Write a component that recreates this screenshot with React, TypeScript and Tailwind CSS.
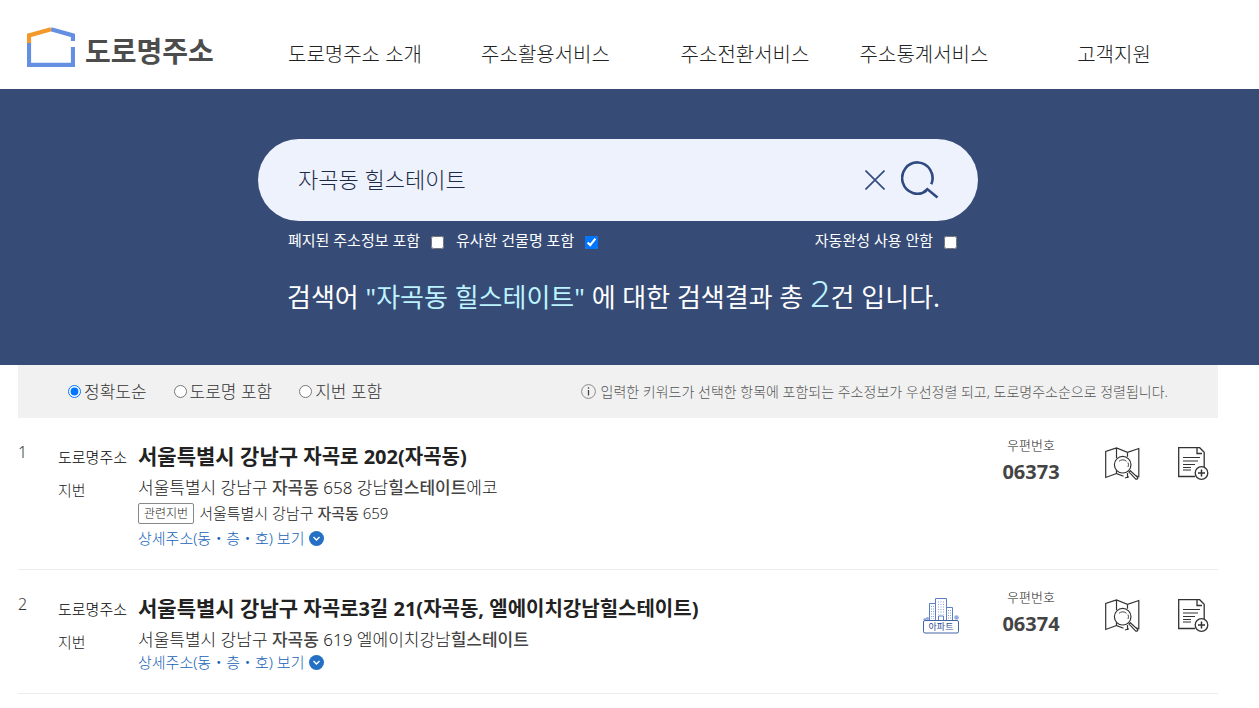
import { useState } from 'react'
import type { ReactNode } from 'react'

interface Resultado {
  id: number
  region: string
  road: string
  jibun: ReactNode
  related?: ReactNode
  zip: string
  apartment?: boolean
}

const MENU = ['도로명주소 소개', '주소활용서비스', '주소전환서비스', '주소통계서비스', '고객지원']

const SORT_OPTIONS = [
  { value: 'accuracy', label: '정확도순' },
  { value: 'road', label: '도로명 포함' },
  { value: 'jibun', label: '지번 포함' },
]

const RESULTS: Resultado[] = [
  {
    id: 1,
    region: '서울특별시 강남구',
    road: '자곡로 202(자곡동)',
    jibun: (
      <>
        서울특별시 강남구 <b className="font-medium text-[#444]">자곡동</b> 658 강남
        <b className="font-medium text-[#444]">힐스테이트</b>에코
      </>
    ),
    related: (
      <>
        서울특별시 강남구 <b className="font-medium text-[#444]">자곡동</b> 659
      </>
    ),
    zip: '06373',
  },
  {
    id: 2,
    region: '서울특별시 강남구',
    road: '자곡로3길 21(자곡동, 엘에이치강남힐스테이트)',
    jibun: (
      <>
        서울특별시 강남구 <b className="font-medium text-[#444]">자곡동</b> 619 엘에이치강남
        <b className="font-medium text-[#444]">힐스테이트</b>
      </>
    ),
    zip: '06374',
    apartment: true,
  },
]

function LogoIcon() {
  return (
    <svg width="48" height="40" viewBox="0 0 48 40" fill="none" strokeWidth="4.200">
      <path d="M24 2.200 46 8.400V14M46 20v17.900H2V16" stroke="#648fe3" />
      <path d="M2 16V8.400L24 2.200" stroke="#f3982a" />
    </svg>
  )
}

function CloseIcon() {
  return (
    <svg width="20" height="20" viewBox="0 0 20 20" fill="none" stroke="#324a7c" strokeWidth="1.600">
      <path d="M.5.5l19 19M19.500.5l-19 19" />
    </svg>
  )
}

function SearchIcon() {
  return (
    <svg width="38" height="38" viewBox="0 0 38 38" fill="none" stroke="#304a80" strokeWidth="2.600">
      <path d="M30.300 23.200A15.200 15.600 0 1 0 25.600 29.400" />
      <path d="M22.800 31.200 26.300 28.100 36.500 36.600" />
    </svg>
  )
}

function InfoIcon() {
  return (
    <svg width="15" height="15" viewBox="0 0 15 15" fill="none">
      <circle cx="7.500" cy="7.500" r="6.900" stroke="#8a8a8a" />
      <path d="M7.500 6v5.500M7.500 3.300v1.500" stroke="#444" strokeWidth="1.300" />
    </svg>
  )
}

function MapIcon() {
  return (
    <svg width="35" height="33" viewBox="0 0 35 33" fill="none" stroke="#333" strokeWidth="1.200">
      <path d="M11.500 26.500 .7 30.500V4.500L11.500 1l11 4.300L33.800 1.500v23M11.500 1v10M11.500 22v4.500l7 2.800M22.500 5.300v4.500M20 31l4-1.200M30 28.500l3.800 1.200V24M22.500 26v5" />
      <circle cx="17.700" cy="17.700" r="8.300" fill="#fff" />
      <path d="M14 14.300a5.500 5.500 0 0 1 7.500 0M23 15.500a5.500 5.500 0 0 1 0 4.500" strokeWidth=".9" />
      <path d="M25.300 23.800l7.200 6.500c.8 1.500-.8 2.400-2 1.600l-6.500-6.800z" fill="#fff" />
    </svg>
  )
}

function DocumentIcon() {
  return (
    <svg width="31" height="33" viewBox="0 0 31 33" fill="none" stroke="#333" strokeWidth="1.300">
      <path d="M17 29.500H.7V.7h21l4.500 4.500V20M19 1v5.500h5" />
      <path d="M5 10.500h17M5 14h15M5 17.500h12M5 20.500h8M5 23h8" strokeWidth="1.200" />
      <circle cx="23.500" cy="26" r="6.300" fill="#fff" />
      <path d="M20 26h7M23.500 22.500v7" strokeWidth="1.500" />
    </svg>
  )
}

function ApartmentIcon() {
  return (
    <svg width="36" height="36" viewBox="0 0 36 36" fill="none" stroke="#5b80c6">
      <path d="M6.500 22.500v-17h6v17M12.500 22.500V.5h11v22M23.500 9.500h6v13M15.500 22.500v-4.500h5v4.500" />
      <path
        d="M8.500 8v13M10.500 8v13M15.500 3.500v13M18 3.500v13M20.500 3.500v13M25.500 12v9M27.500 12v9"
        strokeDasharray="1 1.500"
        stroke="#86a2d8"
      />
      <g fill="#93abdf" stroke="none">
        <circle cx="33.500" cy="19.500" r="2.300" />
        <circle cx="4.500" cy="20.500" r="1.600" />
        <circle cx="1.800" cy="21.300" r="1.300" />
      </g>
      <rect x=".5" y="22.500" width="35" height="12.500" rx="1.500" fill="#fff" stroke="#4265a8" />
      <text
        x="18"
        y="32"
        textAnchor="middle"
        stroke="none"
        fill="#2f4f92"
        className="font-['Noto_Sans_CJK_KR',sans-serif] text-[9px]"
      >
        아파트
      </text>
    </svg>
  )
}

function ExpandIcon() {
  return (
    <svg width="15" height="15" viewBox="0 0 15 15" fill="none">
      <circle cx="7.500" cy="7.500" r="7.500" fill="#2470c4" />
      <path d="M4.500 6l3 3 3-3" stroke="#fff" strokeWidth="1.400" />
    </svg>
  )
}

function Header() {
  return (
    <header className="flex h-[89px] items-center bg-white pr-[30px] pl-[27px]">
      <a href="#" className="flex w-[233px] shrink-0 items-center gap-[10px] pt-1">
        <LogoIcon />
        <span className="pt-2 text-[28px] leading-8 font-bold text-[#4c4c4c]">도로명주소</span>
      </a>
      <nav className="grid flex-1 grid-cols-[190fr_191fr_208fr_150fr_230fr] pt-5 text-center">
        {MENU.map(item => (
          <a key={item} href="#" className="text-[20px] leading-8 font-light whitespace-nowrap text-[#222]">
            {item}
          </a>
        ))}
      </nav>
    </header>
  )
}

function CheckOption({ label, defaultChecked }: { label: string; defaultChecked?: boolean }) {
  return (
    <label className="flex items-center gap-[11px]">
      {label}
      <input type="checkbox" defaultChecked={defaultChecked} className="mt-1 size-[13px]" />
    </label>
  )
}

function SearchPanel() {
  const [keyword, setKeyword] = useState('자곡동 힐스테이트')

  return (
    <section className="bg-[#364b75] pt-[50px] pr-[41px] pb-[44px] pl-[18px]">
      <div className="mx-auto max-w-[720px]">
        <form
          className="flex h-[82px] items-center gap-4 rounded-full bg-[#edf2fc] pr-[39px] pl-10"
          onSubmit={e => e.preventDefault()}
        >
          <input
            type="text"
            aria-label="검색어"
            value={keyword}
            onChange={e => setKeyword(e.target.value)}
            className="min-w-0 flex-1 bg-transparent pb-[3px] text-[22px] leading-8 font-light text-[#1c2a48] outline-none"
          />
          <button type="button" aria-label="지우기" onClick={() => setKeyword('')}>
            <CloseIcon />
          </button>
          <button type="submit" aria-label="검색">
            <SearchIcon />
          </button>
        </form>

        <div className="mt-[9px] flex gap-3 pr-[21px] pl-[30px] text-[15px] leading-5 text-white">
          <CheckOption label="폐지된 주소정보 포함" />
          <CheckOption label="유사한 건물명 포함" defaultChecked />
          <div className="ml-auto">
            <CheckOption label="자동완성 사용 안함" />
          </div>
        </div>

        <p className="mt-[23px] pl-[29px] text-[26px] leading-[48px] whitespace-nowrap text-white">
          검색어 <span className="text-[#bdf3ff]">"자곡동 힐스테이트"</span> 에 대한 검색결과 총{' '}
          <span className="text-[36px] leading-none font-light text-[#bdf3ff]">2</span>건 입니다.
        </p>
      </div>
    </section>
  )
}

function SortBar() {
  const [sort, setSort] = useState('accuracy')

  return (
    <div className="flex h-[53px] items-center justify-between bg-[#f1f1f1] px-[50px]">
      <div className="flex gap-[27px]">
        {SORT_OPTIONS.map(option => (
          <label key={option.value} className="flex items-center gap-[3px] text-[17px] leading-6 font-light text-[#333]">
            <input
              type="radio"
              name="sort"
              value={option.value}
              checked={sort === option.value}
              onChange={() => setSort(option.value)}
              className="size-[13px]"
            />
            {option.label}
          </label>
        ))}
      </div>
      <p className="flex items-center gap-[5px] text-[14px] leading-5 font-light whitespace-nowrap text-[#555]">
        <InfoIcon />
        입력한 키워드가 선택한 항목에 포함되는 주소정보가 우선정렬 되고, 도로명주소순으로 정렬됩니다.
      </p>
    </div>
  )
}

function ResultRow({ item }: { item: Resultado }) {
  return (
    <li className="flex border-b border-[#ececec] pb-[22px] whitespace-nowrap">
      <span className="w-10 shrink-0 pt-[22px] text-[16px] leading-6 font-light text-[#333]">{item.id}</span>

      <div className="w-20 shrink-0 pt-[22px] text-[15px] font-light">
        <p className="leading-[34px] text-black">도로명주소</p>
        <p className="leading-8 text-[#222]">지번</p>
      </div>

      <div className="min-w-0 flex-1 pt-[22px]">
        <h2 className="text-[20px] leading-[34px] font-bold text-[#222]">
          <span className="text-[21px] leading-none">{item.region}</span> {item.road}
        </h2>
        <p className="text-[17px] leading-7 font-light text-[#222]">{item.jibun}</p>
        {item.related && (
          <p className="mb-[6px] flex h-[22px] items-center gap-[5px] text-[15px] font-light text-[#222]">
            <span className="rounded-xs border border-[#888] px-[5px] text-[12px] leading-[19px]">관련지번</span>
            <span>{item.related}</span>
          </p>
        )}
        <button type="button" className="flex h-[17px] items-center gap-[5px] text-[15px] font-light text-[#1763b8]">
          상세주소(동・층・호) 보기
          <ExpandIcon />
        </button>
      </div>

      <div className="flex items-start pr-[9px]">
        {item.apartment && (
          <div className="mr-[43px] pt-7">
            <ApartmentIcon />
          </div>
        )}
        <div className="mr-[45px] w-[58px] pt-[17px] text-center">
          <p className="text-[13px] leading-5 font-light text-[#222]">우편번호</p>
          <p className="text-[20px] leading-[34px] font-bold text-[#444]">{item.zip}</p>
        </div>
        <button type="button" aria-label="지도 보기" className="mr-[38px] pt-[29px]">
          <MapIcon />
        </button>
        <button type="button" aria-label="상세 정보" className="pt-[29px]">
          <DocumentIcon />
        </button>
      </div>
    </li>
  )
}

export default function App() {
  return (
    <div className="min-h-screen bg-white font-['Noto_Sans','Noto_Sans_CJK_KR',sans-serif]">
      <Header />
      <main>
        <SearchPanel />
        <section className="pr-[41px] pl-[18px]">
          <SortBar />
          <ul>
            {RESULTS.map(item => (
              <ResultRow key={item.id} item={item} />
            ))}
          </ul>
        </section>
      </main>
    </div>
  )
}
